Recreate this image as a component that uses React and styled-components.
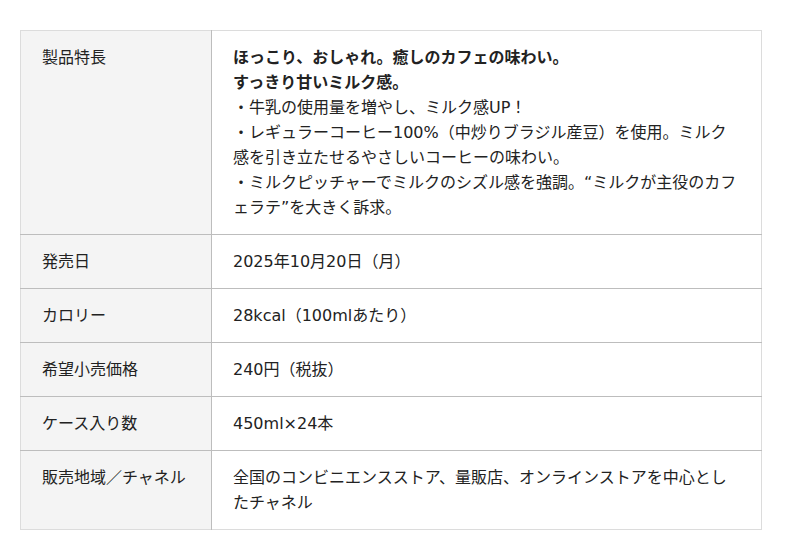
import React from 'react';
import styled, { createGlobalStyle } from 'styled-components';

const GlobalStyle = createGlobalStyle`
    body {
        margin: 0;
        background: #fff;
        font-family: "DejaVu Sans", "Noto Sans CJK JP", sans-serif;
        color: #222;
    }
`

const Page = styled.div`
    padding: 30px 20px;
`

const Table = styled.table`
    width: 742px;
    border-collapse: collapse;
    border: 1px solid #dcdcdc;
    font-size: 16px;
    line-height: 25px;
`

const Row = styled.tr`
    border-top: 1px solid #bdbdbd;
    &:first-child {
        border-top: 1px solid #dcdcdc;
    }
`

const Label = styled.th`
    width: 148px;
    background: #f4f4f4;
    border-right: 1px solid #bdbdbd;
    padding: 14px 21px;
    text-align: left;
    vertical-align: top;
    font-weight: normal;
`

const Value = styled.td`
    padding: 14px 21px;
    vertical-align: top;
`

const Strong = styled.strong`
    font-weight: bold;
    display: block;
`

const rows = [
    ['発売日', '2025年10月20日（月）'],
    ['カロリー', '28kcal（100mlあたり）'],
    ['希望小売価格', '240円（税抜）'],
    ['ケース入り数', '450ml×24本'],
    ['販売地域／チャネル', '全国のコンビニエンスストア、量販店、オンラインストアを中心としたチャネル'],
];

const App = () => {
    return (
        <Page>
            <GlobalStyle />
            <Table>
                <tbody>
                    <Row>
                        <Label>製品特長</Label>
                        <Value>
                            <Strong>ほっこり、おしゃれ。癒しのカフェの味わい。</Strong>
                            <Strong>すっきり甘いミルク感。</Strong>
                            ・牛乳の使用量を増やし、ミルク感UP！<br />
                            ・レギュラーコーヒー100%（中炒りブラジル産豆）を使用。ミルク感を引き立たせるやさしいコーヒーの味わい。<br />
                            ・ミルクピッチャーでミルクのシズル感を強調。“ミルクが主役のカフェラテ”を大きく訴求。
                        </Value>
                    </Row>
                    {rows.map(([k, v]) => (
                        <Row key={k}>
                            <Label>{k}</Label>
                            <Value>{v}</Value>
                        </Row>
                    ))}
                </tbody>
            </Table>
        </Page>
    );
};

export default App;
